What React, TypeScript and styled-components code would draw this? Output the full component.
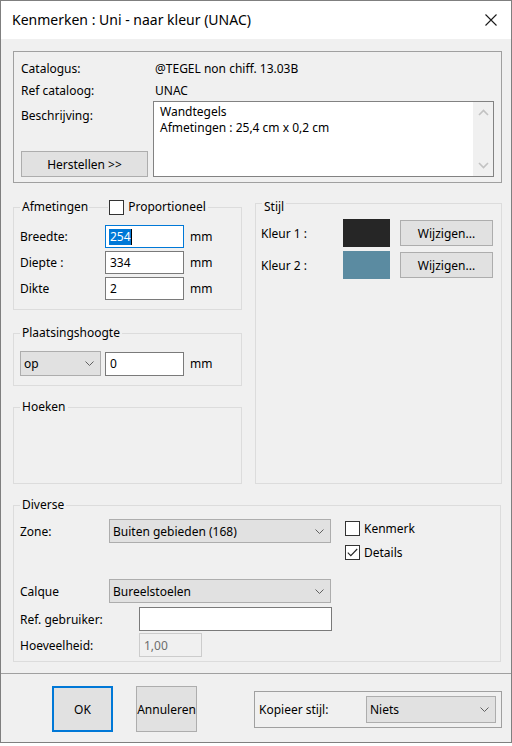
import React from 'react';
import styled, { createGlobalStyle } from 'styled-components';

const GlobalStyle = createGlobalStyle`
  html, body {
    margin: 0;
    padding: 0;
    background: #ffffff;
  }
  body {
    font-family: "Noto Sans", "Segoe UI", sans-serif;
    font-size: 12px;
    color: #000000;
  }
  * {
    box-sizing: border-box;
  }
`;

const S = {
  Window: styled.div`
    width: 512px;
    height: 743px;
    border: 1px solid #7f7f7f;
    background: #f0f0f0;
    display: flex;
    flex-direction: column;
  `,
  TitleBar: styled.div`
    height: 38px;
    flex: 0 0 38px;
    background: #ffffff;
    display: flex;
    align-items: center;
    justify-content: space-between;
    padding: 0 14px 0 11px;
  `,
  Title: styled.span`
    font-size: 14px;
    line-height: 20px;
  `,
  Body: styled.div`
    padding: 12px 9px 0 12px;
    display: flex;
    flex-direction: column;
  `,
  InfoPanel: styled.div`
    border: 1px solid #a0a0a0;
    display: grid;
    grid-template-columns: 132px 1fr;
    grid-template-rows: 22px 22px 76px;
    padding: 5px 7px 5px 7px;
  `,
  Cell: styled.div`
    display: flex;
    align-items: center;
  `,
  Value: styled.div`
    display: flex;
    align-items: center;
    padding-left: 2px;
  `,
  DescLeft: styled.div`
    display: flex;
    flex-direction: column;
    justify-content: space-between;
    padding-top: 6px;
  `,
  DescBox: styled.div`
    border: 1px solid #828282;
    background: #ffffff;
    display: flex;
  `,
  DescText: styled.div`
    flex: 1;
    padding: 2px 6px;
    line-height: 16px;
  `,
  ScrollBar: styled.div`
    width: 20px;
    background: #f0f0f0;
    display: flex;
    flex-direction: column;
    justify-content: space-between;
    align-items: center;
    padding: 7px 0;
  `,
  Button: styled.div<{ $w: number; $h: number; $default?: boolean }>`
    width: ${p => p.$w}px;
    height: ${p => p.$h}px;
    background: #e1e1e1;
    border: ${p => (p.$default ? '2px solid #0078d7' : '1px solid #adadad')};
    display: flex;
    align-items: center;
    justify-content: center;
    white-space: nowrap;
  `,
  Middle: styled.div`
    display: grid;
    grid-template-columns: 229px 1fr;
    column-gap: 13px;
  `,
  LeftCol: styled.div`
    display: flex;
    flex-direction: column;
    margin-top: 24px;
  `,
  Group: styled.div<{ $mt?: number; $h?: number; $mr?: number }>`
    border: 1px solid #dcdcdc;
    margin-top: ${p => p.$mt ?? 0}px;
    margin-right: ${p => p.$mr ?? 0}px;
    ${p => (p.$h ? `height: ${p.$h}px;` : '')}
    display: flex;
    flex-direction: column;
  `,
  Legend: styled.div<{ $lift?: number }>`
    display: flex;
    align-items: center;
    width: fit-content;
    height: 16px;
    line-height: 16px;
    margin: ${p => -9 + (p.$lift ?? 0)}px 0 0 6px;
    padding: 0 2px;
    background: #f0f0f0;
    white-space: nowrap;
  `,
  LegendRule: styled.span`
    width: 19px;
    height: 1px;
    background: #dcdcdc;
    margin: 0 1px 0 1px;
  `,
  Content: styled.div<{ $pt: number; $pb: number; $pl: number }>`
    display: flex;
    flex-direction: column;
    padding: ${p => p.$pt}px 0 ${p => p.$pb}px ${p => p.$pl}px;
  `,
  Row: styled.div<{ $mt?: number }>`
    display: flex;
    align-items: center;
    margin-top: ${p => p.$mt ?? 0}px;
  `,
  Label: styled.div<{ $w: number }>`
    width: ${p => p.$w}px;
    flex: 0 0 ${p => p.$w}px;
    white-space: nowrap;
  `,
  Field: styled.div<{ $w: number; $h: number; $disabled?: boolean }>`
    width: ${p => p.$w}px;
    height: ${p => p.$h}px;
    border: 1px solid ${p => (p.$disabled ? '#cccccc' : '#7a7a7a')};
    background: ${p => (p.$disabled ? '#f0f0f0' : '#ffffff')};
    color: ${p => (p.$disabled ? '#6d6d6d' : '#000000')};
    display: flex;
    align-items: center;
    padding-left: 4px;
  `,
  FocusField: styled.div<{ $w: number; $h: number }>`
    width: ${p => p.$w}px;
    height: ${p => p.$h}px;
    border: 1px solid #0078d7;
    background: #ffffff;
    display: flex;
    align-items: center;
    padding-left: 3px;
  `,
  Selected: styled.span`
    background: #0078d7;
    color: #ffffff;
    line-height: 16px;
    padding: 0 0 0 1px;
  `,
  Caret: styled.span`
    width: 1px;
    height: 16px;
    background: #000000;
  `,
  Unit: styled.span`
    margin-left: 6px;
  `,
  Combo: styled.div<{ $w: number; $h: number }>`
    width: ${p => p.$w}px;
    height: ${p => p.$h}px;
    background: #e1e1e1;
    border: 1px solid #adadad;
    display: flex;
    align-items: center;
    justify-content: space-between;
    padding: 0 6px 0 3px;
    white-space: nowrap;
  `,
  Swatch: styled.div<{ $color: string }>`
    width: 47px;
    height: 28px;
    background: ${p => p.$color};
  `,
  Spacer: styled.div<{ $w: number }>`
    width: ${p => p.$w}px;
  `,
  DivTop: styled.div`
    display: flex;
  `,
  DivLeft: styled.div`
    display: flex;
    flex-direction: column;
  `,
  CheckCol: styled.div`
    display: flex;
    flex-direction: column;
    gap: 9px;
    margin-left: 14px;
    padding-top: 2px;
  `,
  CheckItem: styled.div`
    display: flex;
    align-items: center;
    gap: 4px;
    height: 15px;
    white-space: nowrap;
  `,
  Box: styled.div`
    width: 15px;
    height: 15px;
    border: 1px solid #333333;
    background: #ffffff;
    display: flex;
    align-items: center;
    justify-content: center;
  `,
  Footer: styled.div`
    flex: 1;
    margin-top: 11px;
    border-top: 1px solid #a0a0a0;
    display: flex;
    align-items: flex-start;
    padding: 12px 0 0 51px;
  `,
  CopyBox: styled.div`
    width: 248px;
    height: 37px;
    margin: 5px 0 0 57px;
    border: 1px solid #a0a0a0;
    display: flex;
    align-items: center;
    padding-left: 4px;
  `,
};

const Chevron: React.FC<{ up?: boolean; color?: string }> = ({ up, color = '#606060' }) => (
  <svg width="9" height="5" viewBox="0 0 9 5">
    <path
      d={up ? 'M0.5 4.5 L4.5 0.5 L8.5 4.5' : 'M0.5 0.5 L4.5 4.5 L8.5 0.5'}
      fill="none"
      stroke={color}
      strokeWidth="1"
    />
  </svg>
);

const ScrollArrow: React.FC<{ up?: boolean }> = ({ up }) => (
  <svg width="11" height="7" viewBox="0 0 11 7">
    <path
      d={up ? 'M1 6 L5.5 1.5 L10 6' : 'M1 1 L5.5 5.5 L10 1'}
      fill="none"
      stroke="#c2c2c2"
      strokeWidth="1.6"
    />
  </svg>
);

const CloseIcon = () => (
  <svg width="12" height="12" viewBox="0 0 12 12">
    <path d="M0.5 0.5 L11.5 11.5 M11.5 0.5 L0.5 11.5" stroke="#1a1a1a" strokeWidth="1.1" />
  </svg>
);

const Check = () => (
  <svg width="11" height="9" viewBox="0 0 11 9">
    <path d="M0.8 4.6 L3.8 7.6 L10.2 1" fill="none" stroke="#222222" strokeWidth="1.1" />
  </svg>
);

const ComboBox: React.FC<{ w: number; h: number; value: string }> = ({ w, h, value }) => (
  <S.Combo $w={w} $h={h}>
    <span>{value}</span>
    <Chevron />
  </S.Combo>
);

const CheckBox: React.FC<{ checked?: boolean; label: string }> = ({ checked, label }) => (
  <S.CheckItem>
    <S.Box>{checked && <Check />}</S.Box>
    <span>{label}</span>
  </S.CheckItem>
);

const App: React.FC = () => (
  <>
    <GlobalStyle />
    <S.Window>
      <S.TitleBar>
        <S.Title>Kenmerken : Uni - naar kleur (UNAC)</S.Title>
        <CloseIcon />
      </S.TitleBar>

      <S.Body>
        <S.InfoPanel>
          <S.Cell>Catalogus:</S.Cell>
          <S.Value>@TEGEL non chiff. 13.03B</S.Value>
          <S.Cell>Ref cataloog:</S.Cell>
          <S.Value>UNAC</S.Value>
          <S.DescLeft>
            <span>Beschrijving:</span>
            <S.Button $w={127} $h={26}>Herstellen &gt;&gt;</S.Button>
          </S.DescLeft>
          <S.DescBox>
            <S.DescText>
              <div>Wandtegels</div>
              <div>Afmetingen : 25,4 cm x 0,2 cm</div>
            </S.DescText>
            <S.ScrollBar>
              <ScrollArrow up />
              <ScrollArrow />
            </S.ScrollBar>
          </S.DescBox>
        </S.InfoPanel>

        <S.Middle>
          <S.LeftCol>
            <S.Group>
              <S.Legend>
                <span>Afmetingen</span>
                <S.LegendRule />
                <CheckBox label="Proportioneel" />
              </S.Legend>
              <S.Content $pt={10} $pb={9} $pl={6}>
                <S.Row>
                  <S.Label $w={85}>Breedte:</S.Label>
                  <S.FocusField $w={79} $h={23}>
                    <S.Selected>254</S.Selected>
                    <S.Caret />
                  </S.FocusField>
                  <S.Unit>mm</S.Unit>
                </S.Row>
                <S.Row $mt={3}>
                  <S.Label $w={85}>Diepte :</S.Label>
                  <S.Field $w={79} $h={23}>334</S.Field>
                  <S.Unit>mm</S.Unit>
                </S.Row>
                <S.Row $mt={3}>
                  <S.Label $w={85}>Dikte</S.Label>
                  <S.Field $w={79} $h={23}>2</S.Field>
                  <S.Unit>mm</S.Unit>
                </S.Row>
              </S.Content>
            </S.Group>

            <S.Group $mt={23}>
              <S.Legend>Plaatsingshoogte</S.Legend>
              <S.Content $pt={10} $pb={9} $pl={6}>
                <S.Row>
                  <ComboBox w={81} h={25} value="op" />
                  <S.Spacer $w={4} />
                  <S.Field $w={79} $h={24}>0</S.Field>
                  <S.Unit>mm</S.Unit>
                </S.Row>
              </S.Content>
            </S.Group>

            <S.Group $mt={21} $h={77}>
              <S.Legend>Hoeken</S.Legend>
            </S.Group>
          </S.LeftCol>

          <S.Group $mt={20}>
            <S.Legend $lift={4}>Stijl</S.Legend>
            <S.Content $pt={4} $pb={0} $pl={5}>
              <S.Row>
                <S.Label $w={82}>Kleur 1 :</S.Label>
                <S.Swatch $color="#262626" />
                <S.Spacer $w={10} />
                <S.Button $w={93} $h={26}>Wijzigen...</S.Button>
              </S.Row>
              <S.Row $mt={4}>
                <S.Label $w={82}>Kleur 2 :</S.Label>
                <S.Swatch $color="#5b8ba1" />
                <S.Spacer $w={10} />
                <S.Button $w={93} $h={26}>Wijzigen...</S.Button>
              </S.Row>
            </S.Content>
          </S.Group>
        </S.Middle>

        <S.Group $mt={21} $mr={1}>
          <S.Legend>Diverse</S.Legend>
          <S.Content $pt={6} $pb={4} $pl={6}>
            <S.DivTop>
              <S.DivLeft>
                <S.Row>
                  <S.Label $w={89}>Zone:</S.Label>
                  <ComboBox w={222} h={24} value="Buiten gebieden (168)" />
                </S.Row>
                <S.Row $mt={36}>
                  <S.Label $w={89}>Calque</S.Label>
                  <ComboBox w={222} h={24} value="Bureelstoelen" />
                </S.Row>
              </S.DivLeft>
              <S.CheckCol>
                <CheckBox label="Kenmerk" />
                <CheckBox checked label="Details" />
              </S.CheckCol>
            </S.DivTop>
            <S.Row $mt={4}>
              <S.Label $w={119}>Ref. gebruiker:</S.Label>
              <S.Field $w={193} $h={24} />
            </S.Row>
            <S.Row $mt={2}>
              <S.Label $w={119}>Hoeveelheid:</S.Label>
              <S.Field $w={63} $h={24} $disabled>1,00</S.Field>
            </S.Row>
          </S.Content>
        </S.Group>
      </S.Body>

      <S.Footer>
        <S.Button $w={61} $h={46} $default>OK</S.Button>
        <S.Spacer $w={23} />
        <S.Button $w={61} $h={46}>Annuleren</S.Button>
        <S.CopyBox>
          <S.Label $w={107}>Kopieer stijl:</S.Label>
          <ComboBox w={130} h={27} value="Niets" />
        </S.CopyBox>
      </S.Footer>
    </S.Window>
  </>
);

export default App;
